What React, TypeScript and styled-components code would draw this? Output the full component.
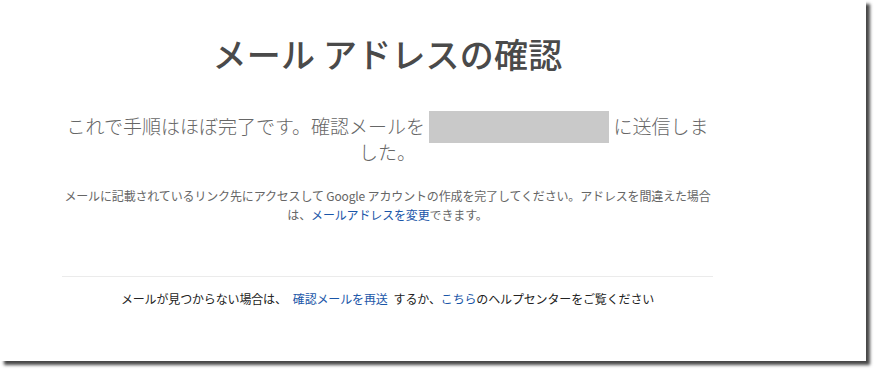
import React from "react";
import styled, { createGlobalStyle } from "styled-components";

const GlobalStyle = createGlobalStyle`
  html, body {
    margin: 0;
    padding: 0;
    background: #ffffff;
  }
  body {
    min-height: 370px;
    font-family: "Noto Sans CJK JP", "Noto Sans", sans-serif;
  }
`;

const Frame = styled.div`
  width: 866px;
  height: 361px;
  background: #ffffff;
  box-shadow: 4px 4px 3px rgba(40, 40, 40, 0.85);
  box-sizing: border-box;
  padding-top: 34px;
  padding-left: 62px;
`;

const Column = styled.div`
  width: 651px;
  display: flex;
  flex-direction: column;
  align-items: stretch;
  text-align: center;
`;

const Title = styled.h1`
  margin: 0;
  font-size: 34px;
  line-height: 40px;
  font-weight: 500;
  color: #4a4a4a;
  letter-spacing: 0.2px;
`;

const Lead = styled.p`
  margin: 41px 0 0;
  font-size: 19px;
  line-height: 18px;
  font-weight: 300;
  color: #666666;
`;

const Masked = styled.span`
  display: inline-block;
  width: 180px;
  height: 32px;
  background: #c9c9c9;
  vertical-align: middle;
  margin-top: -4px;
`;

const Note = styled.p`
  margin: 25px 0 0;
  font-size: 12px;
  line-height: 19px;
  font-weight: 400;
  color: #666666;
  letter-spacing: -0.15px;
`;

const Link = styled.a<{ $gap?: boolean }>`
  color: #1a56a8;
  text-decoration: none;
  margin: ${(p) => (p.$gap ? "0 6px" : "0")};
`;

const Divider = styled.hr`
  margin: 52px 0 0;
  border: 0;
  border-top: 1px solid #ebebeb;
  height: 0;
`;

const Help = styled.p`
  margin: 13px 0 0;
  font-size: 12px;
  line-height: 18px;
  color: #222222;
  letter-spacing: -0.15px;
`;

export default function App() {
  return (
    <>
      <GlobalStyle />
      <Frame>
        <Column>
          <Title>メール アドレスの確認</Title>
          <Lead>
            これで手順はほぼ完了です。確認メールを <Masked /> に送信しました。
          </Lead>
          <Note>
            メールに記載されているリンク先にアクセスして Google
            アカウントの作成を完了してください。アドレスを間違えた場合は、
            <Link href="#">メールアドレスを変更</Link>できます。
          </Note>
          <Divider />
          <Help>
            メールが見つからない場合は、<Link href="#" $gap>確認メールを再送</Link>するか、
            <Link href="#">こちら</Link>のヘルプセンターをご覧ください
          </Help>
        </Column>
      </Frame>
    </>
  );
}
